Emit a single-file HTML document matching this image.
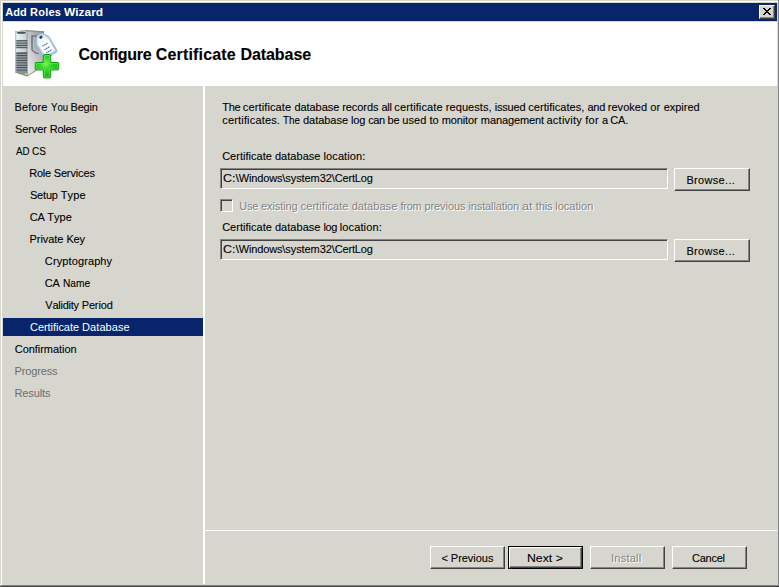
<!DOCTYPE html>
<html><head><meta charset="utf-8"><title>Add Roles Wizard</title><style>
html,body{margin:0;padding:0;}
body{width:779px;height:587px;overflow:hidden;background:#d6d6ce;position:relative;font-family:"Liberation Sans",sans-serif;font-kerning:none;}
.a{position:absolute;}
.t{position:absolute;white-space:pre;line-height:1;font-size:11px;transform-origin:0 0;}
.k{-webkit-text-stroke:0.1px;}
.btn{position:absolute;box-sizing:border-box;background:#d6d6ce;border:1px solid;border-color:#fff #424242 #424242 #fff;box-shadow:inset -1px -1px 0 #848484,inset 1px 1px 0 #d6d6ce;}
.sunk{position:absolute;box-sizing:border-box;background:#d6d6ce;border:1px solid;border-color:#848484 #fff #fff #848484;box-shadow:inset 1px 1px 0 #424242,inset -1px -1px 0 #d6d6ce;}
</style></head><body>
<div class="a" style="left:1px;top:1px;width:777px;height:1px;background:#fff;"></div>
<div class="a" style="left:1px;top:1px;width:1px;height:584px;background:#fff;"></div>
<div class="a" style="left:778px;top:0px;width:1px;height:586px;background:#848484;"></div>
<div class="a" style="left:1px;top:585px;width:778px;height:1px;background:#848484;"></div>
<div class="a" style="left:0px;top:586px;width:779px;height:1px;background:#424242;"></div>
<div class="a" style="left:3px;top:3px;width:774px;height:18px;background:#08246b;"></div>
<div class="a" style="left:3px;top:22px;width:774px;height:64px;background:#fff;"></div>
<div class="a" style="left:203px;top:86px;width:2px;height:498px;background:#fff;"></div>
<div class="a" style="left:205px;top:530px;width:572px;height:1px;background:#fff;"></div>
<div class="a" style="left:3px;top:318px;width:200px;height:18px;background:#08246b;"></div>
<div class="btn" style="left:759px;top:5px;width:16px;height:14px;"></div>
<svg class="a" style="left:763px;top:8px" width="8" height="7" viewBox="0 0 8 7" shape-rendering="crispEdges"><path fill="#000" d="M0 0h2v1h-2zM6 0h2v1h-2zM1 1h2v1h-2zM5 1h2v1h-2zM2 2h4v1h-4zM3 3h2v1h-2zM2 4h4v1h-4zM1 5h2v1h-2zM5 5h2v1h-2zM0 6h2v1h-2zM6 6h2v1h-2z"/></svg>
<svg class="a" style="left:8px;top:24px" width="60" height="60" viewBox="8 24 60 60">
<defs>
<linearGradient id="gs" x1="1" y1="0" x2="0.1" y2="0.95"><stop offset="0" stop-color="#868a8e"/><stop offset="0.4" stop-color="#b4b7ba"/><stop offset="0.75" stop-color="#d6d7d8"/><stop offset="1" stop-color="#ececec"/></linearGradient>
<linearGradient id="gf" x1="0" y1="0" x2="1" y2="0"><stop offset="0" stop-color="#b8c0c6"/><stop offset="0.15" stop-color="#8e979e"/><stop offset="1" stop-color="#6a737b"/></linearGradient>
<linearGradient id="gl" x1="0" y1="0" x2="1" y2="0"><stop offset="0" stop-color="#f4f8f8"/><stop offset="1" stop-color="#c4ccd0"/></linearGradient>
<linearGradient id="gt" x1="0" y1="0" x2="1" y2="1"><stop offset="0" stop-color="#e4f0fa"/><stop offset="1" stop-color="#9cc0e0"/></linearGradient>
<radialGradient id="gp" cx="0.45" cy="0.4" r="0.6"><stop offset="0" stop-color="#80f050"/><stop offset="0.45" stop-color="#30d426"/><stop offset="1" stop-color="#10b010"/></radialGradient>
<clipPath id="cf"><polygon points="15.2,31.2 27.4,30.3 27.4,76.6 15.2,72.6"/></clipPath>
</defs>
<!-- side face -->
<polygon points="27.2,30.3 44,31.2 44,66 27.4,76.6" fill="url(#gs)"/>
<polygon points="27.4,76.6 44,66 44,64.8 27.4,75.2" fill="#5c6064" opacity="0.55"/>
<polygon points="27.2,30.3 44,31.2 44,32.2 27.2,31.4" fill="#8a8e92"/>
<!-- handle -->
<path d="M32 35.9 h6 v0 M32 35.9 v12.8 q0 1.8 1.6 2.6 l2.2 1.6 q1.2 0.7 2.2 0.7" fill="none" stroke="#6e747a" stroke-width="1.5" stroke-linecap="round"/>
<path d="M33.4 37 h5 v14.6 l-3 -1.6 q-1.6 -0.8 -1.6 -2.6z" fill="#a6aaae" opacity="0.7"/>
<!-- front face -->
<g clip-path="url(#cf)">
<rect x="15" y="30" width="13" height="48" fill="url(#gf)"/>
<rect x="15" y="30" width="13" height="2" fill="#8a9298"/>
<rect x="15" y="31.4" width="13" height="2.6" fill="#dfe6e8"/><ellipse cx="21.4" cy="32.9" rx="4.6" ry="1.1" fill="#42555e"/>
<rect x="15" y="33.8" width="13" height="6.4" fill="url(#gl)"/>
<g fill="#4c545c">
<rect x="16.4" y="40.2" width="11" height="1.2"/><rect x="16.4" y="42.5" width="11" height="1.2"/><rect x="16.4" y="44.8" width="11" height="1.2"/><rect x="16.4" y="47.1" width="11" height="1.2"/>
</g>
<g fill="#a4acb2">
<rect x="16.4" y="41.4" width="11" height="1.1"/><rect x="16.4" y="43.7" width="11" height="1.1"/><rect x="16.4" y="46" width="11" height="1.1"/>
</g>
<rect x="15" y="48.3" width="13" height="4" fill="url(#gl)" opacity="0.9"/>
<g fill="#444c54">
<rect x="16.4" y="52.6" width="11" height="1.3"/><rect x="16.4" y="55" width="11" height="1.3"/><rect x="16.4" y="57.4" width="11" height="1.3"/><rect x="16.4" y="59.8" width="11" height="1.3"/><rect x="16.4" y="62.2" width="11" height="1.3"/><rect x="16.4" y="64.6" width="11" height="1.3"/><rect x="16.4" y="67" width="11" height="1.3"/><rect x="16.4" y="69.4" width="11" height="1.3"/>
</g>
<g fill="#9aa2a8">
<rect x="16.4" y="53.9" width="11" height="1.1"/><rect x="16.4" y="56.3" width="11" height="1.1"/><rect x="16.4" y="58.7" width="11" height="1.1"/><rect x="16.4" y="61.1" width="11" height="1.1"/><rect x="16.4" y="63.5" width="11" height="1.1"/><rect x="16.4" y="65.9" width="11" height="1.1"/><rect x="16.4" y="68.3" width="11" height="1.1"/>
</g>
<rect x="15" y="70.7" width="13" height="7" fill="#88929a"/>
<rect x="15" y="30" width="1.3" height="48" fill="#aab4ba" opacity="0.8"/>
<rect x="26.6" y="30" width="1" height="48" fill="#5a646c" opacity="0.6"/>
<rect x="24.8" y="73" width="2.2" height="2" fill="#9cf020"/>
</g>
<!-- tag -->
<g transform="translate(46.9,47.6) rotate(-30)">
<path d="M-7.3 7.2 V-7.6 Q-7.3 -8.6 -6.7 -9.4 L-3.6 -14 Q-2.8 -15.1 -1.4 -15.1 H1.4 Q2.8 -15.1 3.6 -14 L6.7 -9.4 Q7.3 -8.6 7.3 -7.6 V7.2 Q7.3 8.8 5.7 8.8 H-5.7 Q-7.3 8.8 -7.3 7.2Z" fill="url(#gt)" stroke="#94badc" stroke-width="0.9"/>
<path d="M-5.6 -7.4 H5.6 V6.6 H-5.6Z" fill="#fff"/>
<path d="M-5.6 -7.4 L-2.6 -12.2 H2.6 L5.6 -7.4Z" fill="#f0f6fc"/>
<ellipse cx="0" cy="-12" rx="1.8" ry="1.5" fill="#3c444c"/>
<g stroke="#4a66c4" stroke-width="1.2" stroke-dasharray="1.4 0.5">
<path d="M-3.1 -3.5H3.1M-3.1 0.6H3.1M-3.1 4.3H3.1"/>
</g>
</g>
<!-- plus -->
<path d="M44.4 54.5 h5.2 q1.1 0 1.1 1.1 v6.9 h6.9 q1.1 0 1.1 1.1 v5.2 q0 1.1 -1.1 1.1 h-6.9 v6.9 q0 1.1 -1.1 1.1 h-5.2 q-1.1 0 -1.1 -1.1 v-6.9 h-6.9 q-1.1 0 -1.1 -1.1 v-5.2 q0 -1.1 1.1 -1.1 h6.9 v-6.9 q0 -1.1 1.1 -1.1z" fill="url(#gp)" stroke="#0c960c" stroke-width="1"/>
<path d="M44.7 55.6 h4.6 q0.4 0 0.4 0.4 v7.6 h7.6 q0.4 0 0.4 0.4 v4.6 q0 0.4 -0.4 0.4 h-7.6 v7.6 q0 0.4 -0.4 0.4 h-4.6 q-0.4 0 -0.4 -0.4 v-7.6 h-7.6 q-0.4 0 -0.4 -0.4 v-4.6 q0 -0.4 0.4 -0.4 h7.6 v-7.6 q0 -0.4 0.4 -0.4z" fill="none" stroke="#74ec64" stroke-width="0.8" opacity="0.8"/>
</svg>
<div class="sunk" style="left:220px;top:168px;width:448px;height:21px;"></div>
<div class="sunk" style="left:220px;top:239px;width:448px;height:21px;"></div>
<div class="sunk" style="left:220px;top:199px;width:13px;height:13px;"></div>
<div class="btn" style="left:674px;top:168px;width:76px;height:23px;"></div>
<div class="btn" style="left:674px;top:239px;width:76px;height:23px;"></div>
<div class="btn" style="left:430px;top:546px;width:75px;height:23px;"></div>
<div class="a" style="left:508px;top:546px;width:75px;height:23px;background:#000;"></div>
<div class="btn" style="left:509px;top:547px;width:73px;height:21px;"></div>
<div class="btn" style="left:590px;top:546px;width:75px;height:23px;"></div>
<div class="btn" style="left:672px;top:546px;width:75px;height:23px;"></div>
<div class="t" id="title_0" style="top:7px;font-weight:bold;color:#fff;left:5.13px;letter-spacing:0.125px;">Add </div>
<div class="t" id="title_1" style="top:7px;font-weight:bold;color:#fff;left:30.06px;letter-spacing:0.236px;">Roles </div>
<div class="t" id="title_2" style="top:7px;font-weight:bold;color:#fff;left:64.49px;transform:scaleX(1.0844);">Wizard</div>
<div class="t k" id="head_0" style="top:47px;font-size:16px;font-weight:bold;left:78.54px;letter-spacing:-0.319px;">Configure </div>
<div class="t k" id="head_1" style="top:47px;font-size:16px;font-weight:bold;left:155.84px;letter-spacing:0.158px;">Certificate </div>
<div class="t k" id="head_2" style="top:47px;font-size:16px;font-weight:bold;left:240.43px;letter-spacing:-0.062px;">Database</div>
<div class="t k" id="s0_0" style="top:102px;left:14.50px;letter-spacing:0.099px;">Before </div>
<div class="t k" id="s0_1" style="top:102px;left:50.69px;transform:scaleX(0.8767);">You </div>
<div class="t k" id="s0_2" style="top:102px;left:70.50px;letter-spacing:-0.204px;">Begin</div>
<div class="t k" id="s1_0" style="top:124px;left:14.90px;letter-spacing:-0.094px;">Server </div>
<div class="t k" id="s1_1" style="top:124px;left:49.70px;letter-spacing:-0.256px;">Roles</div>
<div class="t k" id="s2_0" style="top:146px;left:15.68px;transform:scaleX(0.8869);">AD </div>
<div class="t k" id="s2_1" style="top:146px;left:31.99px;transform:scaleX(0.9073);">CS</div>
<div class="t k" id="s3_0" style="top:168px;left:29.30px;letter-spacing:-0.255px;">Role </div>
<div class="t k" id="s3_1" style="top:168px;left:53.70px;letter-spacing:-0.140px;">Services</div>
<div class="t k" id="s4_0" style="top:190px;left:29.90px;letter-spacing:-0.175px;">Setup </div>
<div class="t k" id="s4_1" style="top:190px;left:60.65px;letter-spacing:0.160px;">Type</div>
<div class="t k" id="s5_0" style="top:212px;left:29.84px;letter-spacing:-0.275px;">CA </div>
<div class="t k" id="s5_1" style="top:212px;left:47.35px;letter-spacing:-0.006px;">Type</div>
<div class="t k" id="s6_0" style="top:234px;left:29.50px;letter-spacing:-0.049px;">Private </div>
<div class="t k" id="s6_1" style="top:234px;left:66.40px;letter-spacing:-0.115px;">Key</div>
<div class="t k" id="s7" style="top:256px;left:44.84px;letter-spacing:0.113px;">Cryptography</div>
<div class="t k" id="s8_0" style="top:278px;left:44.84px;letter-spacing:-0.227px;">CA </div>
<div class="t k" id="s8_1" style="top:278px;left:62.56px;transform:scaleX(0.9266);">Name</div>
<div class="t k" id="s9_0" style="top:300px;left:45.35px;letter-spacing:-0.241px;">Validity </div>
<div class="t k" id="s9_1" style="top:300px;left:81.70px;letter-spacing:-0.137px;">Period</div>
<div class="t" id="s10_0" style="top:322px;color:#fff;left:30.04px;letter-spacing:-0.051px;">Certificate </div>
<div class="t" id="s10_1" style="top:322px;color:#fff;left:82.00px;letter-spacing:0.086px;">Database</div>
<div class="t k" id="s11" style="top:344px;left:14.84px;letter-spacing:-0.053px;">Confirmation</div>
<div class="t" id="s12" style="top:366px;color:#6d6d6d;left:14.50px;letter-spacing:-0.145px;">Progress</div>
<div class="t" id="s13" style="top:388px;color:#6d6d6d;left:14.50px;letter-spacing:-0.130px;">Results</div>
<div class="t k" id="p1_0" style="top:102px;left:222.35px;letter-spacing:-0.383px;">The </div>
<div class="t k" id="p1_1" style="top:102px;left:242.83px;letter-spacing:0.123px;">certificate </div>
<div class="t k" id="p1_2" style="top:102px;left:294.44px;letter-spacing:-0.065px;">database </div>
<div class="t k" id="p1_3" style="top:102px;left:342.17px;letter-spacing:-0.059px;">records </div>
<div class="t k" id="p1_4" style="top:102px;left:381.43px;letter-spacing:-0.290px;">all </div>
<div class="t k" id="p1_5" style="top:102px;left:394.33px;letter-spacing:0.117px;">certificate </div>
<div class="t k" id="p1_6" style="top:102px;left:445.87px;letter-spacing:0.059px;">requests, </div>
<div class="t k" id="p1_7" style="top:102px;left:494.76px;letter-spacing:-0.198px;">issued </div>
<div class="t k" id="p1_8" style="top:102px;left:528.23px;letter-spacing:0.044px;">certificates, </div>
<div class="t k" id="p1_9" style="top:102px;left:587.53px;letter-spacing:-0.293px;">and </div>
<div class="t k" id="p1_10" style="top:102px;left:607.77px;letter-spacing:0.035px;">revoked </div>
<div class="t k" id="p1_11" style="top:102px;left:650.24px;letter-spacing:0.186px;">or </div>
<div class="t k" id="p1_12" style="top:102px;left:663.63px;">expired</div>
<div class="t k" id="p2_0" style="top:115px;left:222.33px;letter-spacing:0.160px;">certificates. </div>
<div class="t k" id="p2_1" style="top:115px;left:283.28px;transform:scaleX(0.8943);">The </div>
<div class="t k" id="p2_2" style="top:115px;left:302.94px;letter-spacing:-0.022px;">database </div>
<div class="t k" id="p2_3" style="top:115px;left:351.06px;letter-spacing:-0.165px;">log </div>
<div class="t k" id="p2_4" style="top:115px;left:368.13px;letter-spacing:-0.333px;">can </div>
<div class="t k" id="p2_5" style="top:115px;left:387.59px;letter-spacing:-0.199px;">be </div>
<div class="t k" id="p2_6" style="top:115px;left:402.29px;letter-spacing:0.068px;">used </div>
<div class="t k" id="p2_7" style="top:115px;left:429.53px;">to </div>
<div class="t k" id="p2_8" style="top:115px;left:441.77px;letter-spacing:-0.142px;">monitor </div>
<div class="t k" id="p2_9" style="top:115px;left:480.87px;letter-spacing:-0.100px;">management </div>
<div class="t k" id="p2_10" style="top:115px;left:546.53px;letter-spacing:0.238px;">activity </div>
<div class="t k" id="p2_11" style="top:115px;left:585.34px;letter-spacing:0.199px;">for </div>
<div class="t k" id="p2_12" style="top:115px;left:602.03px;letter-spacing:-0.483px;">a </div>
<div class="t k" id="p2_13" style="top:115px;left:610.24px;letter-spacing:-0.087px;">CA.</div>
<div class="t k" id="l1_0" style="top:151px;left:222.14px;letter-spacing:0.019px;">Certificate </div>
<div class="t k" id="l1_1" style="top:151px;left:274.94px;letter-spacing:0.034px;">database </div>
<div class="t k" id="l1_2" style="top:151px;left:323.56px;letter-spacing:0.097px;">location:</div>
<div class="t k" id="t1_0" style="top:173px;left:222.77px;transform:scaleX(1.1319);">C:\</div>
<div class="t k" id="t1_1" style="top:173px;left:238.75px;letter-spacing:-0.154px;">Windows</div>
<div class="t k" id="t1_2" style="top:173px;left:282.30px;letter-spacing:-0.070px;">\system32</div>
<div class="t k" id="t1_3" style="top:173px;left:331.80px;letter-spacing:-0.154px;">\CertLog</div>
<div class="t" id="cb_0" style="top:201px;color:#848484;left:239.15px;letter-spacing:-0.209px;text-shadow:1px 1px 0 #fff;">Use </div>
<div class="t" id="cb_1" style="top:201px;color:#848484;left:260.93px;letter-spacing:-0.073px;text-shadow:1px 1px 0 #fff;">existing </div>
<div class="t" id="cb_2" style="top:201px;color:#848484;left:300.63px;letter-spacing:0.073px;text-shadow:1px 1px 0 #fff;">certificate </div>
<div class="t" id="cb_3" style="top:201px;color:#848484;left:351.64px;letter-spacing:0.054px;text-shadow:1px 1px 0 #fff;">database </div>
<div class="t" id="cb_4" style="top:201px;color:#848484;left:400.44px;letter-spacing:-0.222px;text-shadow:1px 1px 0 #fff;">from </div>
<div class="t" id="cb_5" style="top:201px;color:#848484;left:424.39px;letter-spacing:-0.062px;text-shadow:1px 1px 0 #fff;">previous </div>
<div class="t" id="cb_6" style="top:201px;color:#848484;left:468.46px;letter-spacing:-0.120px;text-shadow:1px 1px 0 #fff;">installation </div>
<div class="t" id="cb_7" style="top:201px;color:#848484;left:521.87px;transform:scaleX(1.1366);text-shadow:1px 1px 0 #fff;">at </div>
<div class="t" id="cb_8" style="top:201px;color:#848484;left:535.83px;letter-spacing:-0.170px;text-shadow:1px 1px 0 #fff;">this </div>
<div class="t" id="cb_9" style="top:201px;color:#848484;left:555.16px;letter-spacing:0.034px;text-shadow:1px 1px 0 #fff;">location</div>
<div class="t k" id="l2_0" style="top:222px;left:222.14px;letter-spacing:0.019px;">Certificate </div>
<div class="t k" id="l2_1" style="top:222px;left:274.94px;letter-spacing:0.034px;">database </div>
<div class="t k" id="l2_2" style="top:222px;left:323.56px;letter-spacing:-0.384px;">log </div>
<div class="t k" id="l2_3" style="top:222px;left:339.76px;letter-spacing:0.122px;">location:</div>
<div class="t k" id="t2_0" style="top:244px;left:222.77px;transform:scaleX(1.1319);">C:\</div>
<div class="t k" id="t2_1" style="top:244px;left:238.75px;letter-spacing:-0.154px;">Windows</div>
<div class="t k" id="t2_2" style="top:244px;left:282.30px;letter-spacing:-0.070px;">\system32</div>
<div class="t k" id="t2_3" style="top:244px;left:331.80px;letter-spacing:-0.154px;">\CertLog</div>
<div class="t k" id="b1" style="top:175px;left:686.40px;letter-spacing:0.332px;">Browse...</div>
<div class="t k" id="b2" style="top:246px;left:686.40px;letter-spacing:0.332px;">Browse...</div>
<div class="t k" id="bp" style="top:553px;left:441.46px;letter-spacing:-0.037px;">&lt; Previous</div>
<div class="t k" id="bn" style="top:553px;left:526.89px;transform:scaleX(1.1155);">Next &gt;</div>
<div class="t" id="bi" style="top:553px;color:#848484;left:610.98px;letter-spacing:0.253px;text-shadow:1px 1px 0 #fff;">Install</div>
<div class="t k" id="bc" style="top:553px;left:692.04px;letter-spacing:-0.249px;">Cancel</div>
</body></html>
